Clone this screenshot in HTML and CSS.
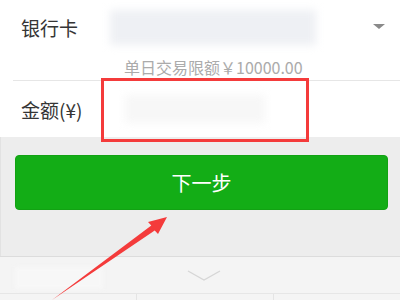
FILE: index.html
```html
<!DOCTYPE html>
<html lang="zh-CN">
<head>
<meta charset="utf-8">
<link rel="stylesheet" href="styles.css">
</head>
<body>
<div class="page">
  <section class="form">
    <div class="row row-card">
      <span class="label">银行卡</span>
      <div class="field">
        <div class="blur blur-card"></div>
      </div>
      <span class="caret"></span>
    </div>
    <div class="limit">单日交易限额￥10000.00</div>
    <div class="divider"></div>
    <div class="row row-amount">
      <span class="label">金额(¥)</span>
      <div class="field">
        <div class="blur blur-amount"></div>
      </div>
    </div>
  </section>
  <section class="actions">
    <button class="next">下一步</button>
  </section>
  <section class="keyboard">
    <div class="kb-head">
      <div class="kb-tab"></div>
      <svg class="chevron" width="34" height="12" viewBox="0 0 34 12"><path d="M1 1 L17 10 L33 1" fill="none" stroke="#d6d6d6" stroke-width="1.4"/></svg>
    </div>
    <div class="kb-keys">
      <div class="key"></div>
      <div class="key"></div>
      <div class="key"></div>
    </div>
  </section>
  <div class="highlight"></div>
  <svg class="arrow" width="400" height="300" viewBox="0 0 400 300">
    <polygon points="52,300 151.3,225.6 148,222 167,217 158,234 154.7,230.4" fill="#f43b3b"/>
  </svg>
</div>
</body>
</html>
```
FILE: styles.css
```css
html, body {
  margin: 0;
  padding: 0;
}
body {
  font-family: "Noto Sans CJK SC", "Noto Sans", sans-serif;
  background: #ffffff;
  width: 400px;
  height: 300px;
  overflow: hidden;
}
.page {
  position: relative;
  width: 400px;
  height: 300px;
}
.form {
  background: #ffffff;
  height: 137px;
}
.row {
  display: flex;
  align-items: center;
  padding-left: 21px;
}
.row-card {
  height: 54px;
}
.row-amount {
  height: 56px;
}
.label {
  font-size: 19px;
  color: #353535;
  width: 89px;
  flex: none;
  line-height: 1;
}
.field {
  flex: 1;
  height: 100%;
  position: relative;
}
.blur {
  position: absolute;
  filter: blur(4px);
}
.blur-card {
  left: 0;
  top: 10px;
  width: 206px;
  height: 35px;
  background: #eef0f4;
}
.blur-amount {
  left: 15px;
  top: 14px;
  width: 140px;
  height: 28px;
  background: #f7f7f7;
}
.caret {
  width: 0;
  height: 0;
  border-left: 6px solid transparent;
  border-right: 6px solid transparent;
  border-top: 5px solid #8a8a8a;
  margin-right: 15px;
  margin-top: -2px;
}
.limit {
  font-size: 16px;
  color: #ababab;
  padding-left: 124px;
  height: 26px;
  line-height: 26px;
}
.divider {
  height: 1px;
  background: #e6e6e6;
  margin-left: 13px;
}
.actions {
  background: #ededed;
  height: 119px;
  padding: 18px 12px 0 14px;
  box-sizing: border-box;
  border-left: 1px solid #e2e2e2;
}
.next {
  display: block;
  width: 100%;
  height: 55px;
  border: 1px solid #12a213;
  border-radius: 4px;
  background: #13ad16;
  color: #ffffff;
  font-family: "Noto Sans CJK SC", sans-serif;
  font-size: 20px;
  padding: 0;
}
.keyboard {
  background: #f4f4f4;
  border-top: 1px solid #dcdcdc;
  height: 43px;
}
.kb-head {
  height: 36px;
  display: flex;
  align-items: center;
  justify-content: center;
  position: relative;
}
.kb-tab {
  position: absolute;
  left: 15px;
  top: 10px;
  width: 88px;
  height: 22px;
  background: #f7f7f7;
  filter: blur(2px);
}
.chevron {
  margin-top: 2px;
  margin-left: 8px;
}
.kb-keys {
  border-top: 1px solid #e6e6e6;
  display: flex;
  height: 7px;
}
.key {
  flex: none;
  width: 136px;
  border-right: 1px solid #e4e4e4;
}
.key:last-child {
  border-right: none;
  flex: 1;
}
.highlight {
  position: absolute;
  left: 101px;
  top: 78px;
  width: 208px;
  height: 64px;
  box-sizing: border-box;
  border: 3px solid #f43b3b;
}
.arrow {
  position: absolute;
  left: 0;
  top: 0;
}
```
